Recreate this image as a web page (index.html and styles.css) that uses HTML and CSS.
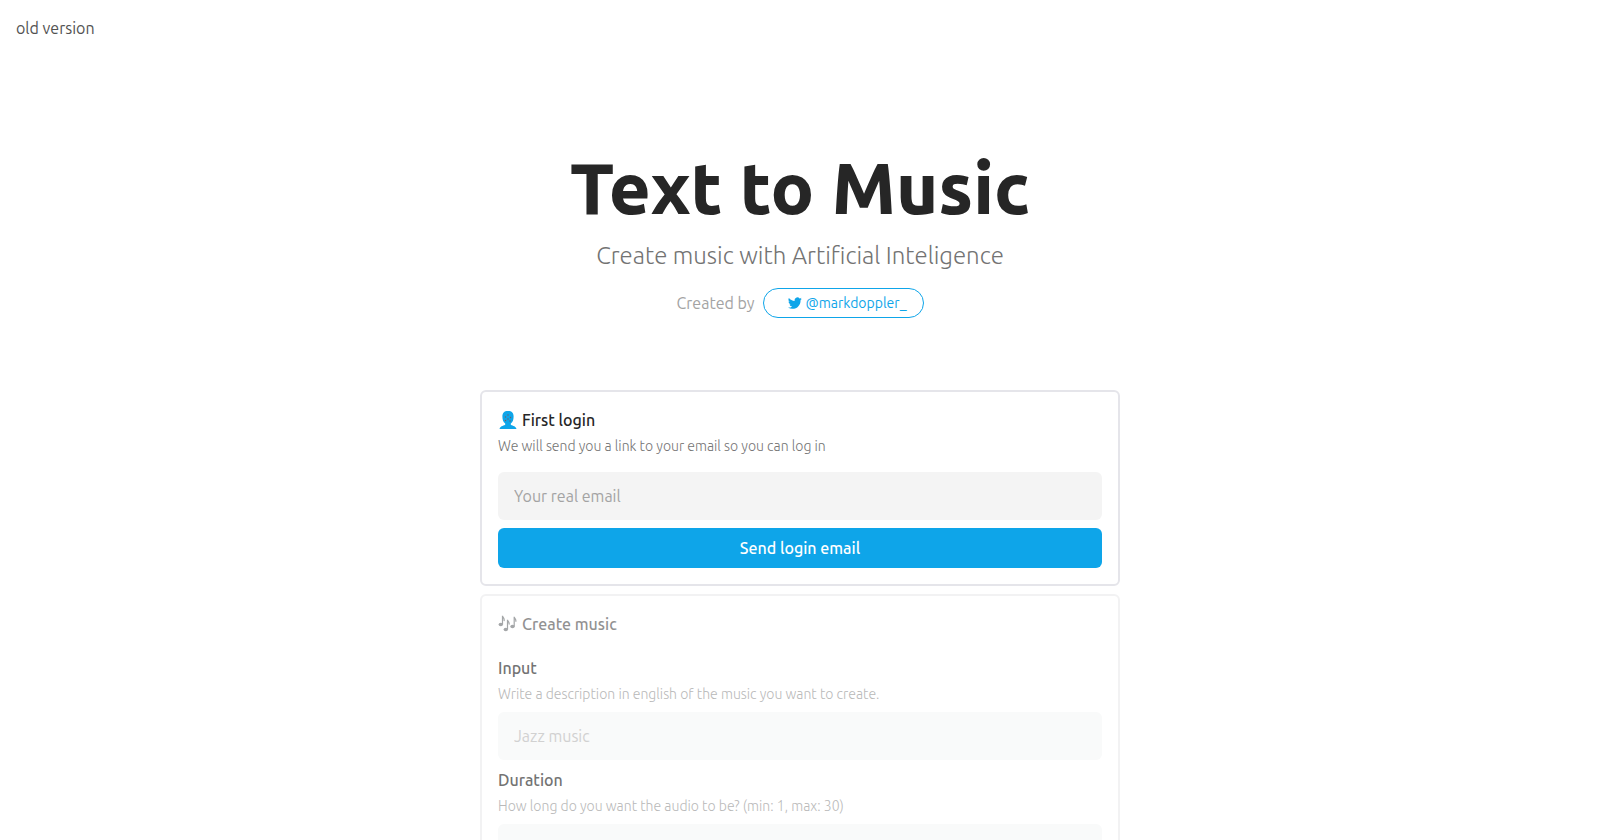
FILE: index.html
```html
<!DOCTYPE html>
<html lang="en">
<head>
<meta charset="utf-8">
<meta name="viewport" content="width=device-width, initial-scale=1">
<title>Text to Music</title>
<link rel="stylesheet" href="styles.css">
</head>
<body>
<nav class="topbar"><a class="topbar-link" href="#old">old version</a></nav>
<main class="page">
  <header class="hero">
    <h1 class="hero-title">Text to Music</h1>
    <p class="hero-subtitle">Create music with Artificial Inteligence</p>
    <div class="credit">
      <span class="credit-label">Created by</span>
      <a class="pill" href="#markdoppler">
        <svg class="pill-icon" viewBox="0 0 24 24" aria-hidden="true"><path fill="currentColor" d="M23.6 4.9c-.9.4-1.800.6-2.800.8 1-.6 1.800-1.600 2.100-2.700-.9.600-2 1-3.100 1.200a4.800 4.800 0 0 0-8.300 4.400C7.500 8.400 4 6.500 1.600 3.600a4.900 4.900 0 0 0 1.500 6.500c-.8 0-1.500-.2-2.200-.6v.1c0 2.300 1.700 4.300 3.900 4.700-.7.200-1.500.2-2.200.1.600 1.900 2.400 3.300 4.500 3.400A9.800 9.800 0 0 1 0 19.800a13.800 13.800 0 0 0 7.500 2.200c9.100 0 14.300-7.700 14-14.600.8-.7 1.600-1.500 2.100-2.500z"/></svg>
        <span>@markdoppler_</span>
      </a>
    </div>
  </header>
  <form class="card">
    <div class="card-head">
      <h2 class="card-title">
        <svg class="emoji" viewBox="0 0 20 20" aria-hidden="true"><path fill="#0ea5e9" d="M10 1c-4 0-5.600 2-5.600 5.500 0 3.300.8 5.600 2.800 7v1.200c-.5 1-4.700.6-5.700 4.300h17c-1-3.700-5.200-3.300-5.700-4.300v-1.200c2-1.400 2.800-3.700 2.800-7C15.600 3 14 1 10 1z"/><g fill="#7b5a60"><circle cx="10" cy="5" r=".7"/><circle cx="7.500" cy="7" r=".7"/><circle cx="12.500" cy="7.500" r=".7"/><circle cx="10" cy="9" r=".7"/><circle cx="7.500" cy="10.500" r=".7"/><circle cx="12" cy="11" r=".7"/></g></svg>
        First login
      </h2>
      <p class="hint">We will send you a link to your email so you can log in</p>
    </div>
    <input class="field" type="email" placeholder="Your real email" aria-label="Your real email">
    <button class="button" type="button">Send login email</button>
  </form>
  <form class="card card-muted">
    <div class="card-head">
      <h2 class="card-title">
        <svg class="emoji" viewBox="0 0 20 20" aria-hidden="true"><g fill="#4b5054"><ellipse cx="2.800" cy="10.500" rx="2.200" ry="1.700"/><ellipse cx="7.800" cy="15.500" rx="2.200" ry="1.700"/><ellipse cx="14.500" cy="12.500" rx="2.200" ry="1.700"/></g><g fill="none" stroke="#4b5054" stroke-width="1.200"><path d="M4.500 10.500V1.800c.3 2 2.400 2.500 1.500 5.200M9.500 15.500V5.800c.3 2 2.300 2.500 1.500 4.700M16.200 12.500V2.800c.3 2 2.400 2.500 1.500 5"/></g></svg>
        Create music
      </h2>
    </div>
    <div class="group">
      <label class="label" for="prompt">Input</label>
      <p class="hint">Write a description in english of the music you want to create.</p>
      <input class="field" id="prompt" type="text" placeholder="Jazz music" disabled>
    </div>
    <div class="group">
      <label class="label" for="duration">Duration</label>
      <p class="hint">How long do you want the audio to be? (min: 1, max: 30)</p>
      <input class="field" id="duration" type="number" min="1" max="30" disabled>
    </div>
  </form>
</main>
</body>
</html>
```
FILE: styles.css
```css
* { box-sizing: border-box; }
body {
  margin: 0;
  background: #fff;
  color: #262626;
  font: 400 16px/24px Ubuntu, "Noto Sans", "Open Sans", sans-serif;
}
h1, h2, p { margin: 0; }
a { text-decoration: none; }
.topbar { padding: 16px; }
.topbar-link { color: #525252; }
.page {
  display: flex;
  flex-direction: column;
  gap: 8px;
  max-width: 672px;
  margin: 0 auto;
  padding: 96px 16px 16px;
}
.hero {
  display: flex;
  flex-direction: column;
  align-items: center;
  gap: 16px;
  margin-bottom: 64px;
  text-align: center;
}
.hero-title { font-size: 72px; line-height: 72px; font-weight: 800; }
.hero-subtitle {
  color: #737373;
  font-size: 24px;
  line-height: 32px;
  font-weight: 300;
}
.credit { display: flex; align-items: center; gap: 8px; }
.credit-label { color: #a3a3a3; }
.pill {
  display: flex;
  align-items: center;
  gap: 4px;
  padding: 4px 16px 4px 24px;
  border: 1px solid #0ea5e9;
  border-radius: 16px;
  color: #0ea5e9;
  font-size: 14px;
  line-height: 20px;
}
.pill-icon { width: 14px; height: 14px; }
.card {
  display: flex;
  flex-direction: column;
  gap: 8px;
  padding: 16px;
  border: 2px solid #e5e5ea;
  border-radius: 6px;
}
.card-head { margin-bottom: 8px; }
.card-muted .card-head { margin-bottom: 12px; }
.card-title {
  display: flex;
  align-items: center;
  gap: 4px;
  font-size: 16px;
  line-height: 24px;
  font-weight: 500;
}
.emoji { width: 20px; height: 20px; }
.hint {
  margin-top: 4px;
  color: #737373;
  font-size: 14px;
  line-height: 20px;
  font-weight: 300;
}
.label { display: block; font-weight: 500; }
.field {
  display: block;
  width: 100%;
  height: 48px;
  padding: 0 16px;
  border: 0;
  border-radius: 6px;
  background: #f4f4f4;
  font: inherit;
}
.field::placeholder { color: #a3a3a3; opacity: 1; }
.button {
  height: 40px;
  border: 0;
  border-radius: 6px;
  background: #0ea5e9;
  color: #fff;
  font: inherit;
  font-weight: 500;
}
.card-muted { border-color: #f2f2f3; }
.card-muted .card-title { opacity: .5; }
.card-muted .label { color: #737373; }
.card-muted .hint { color: #b9b9b9; }
.card-muted .field { margin-top: 8px; background: #f9fafa; }
.card-muted .field::placeholder { color: #d1d1d1; }
```
